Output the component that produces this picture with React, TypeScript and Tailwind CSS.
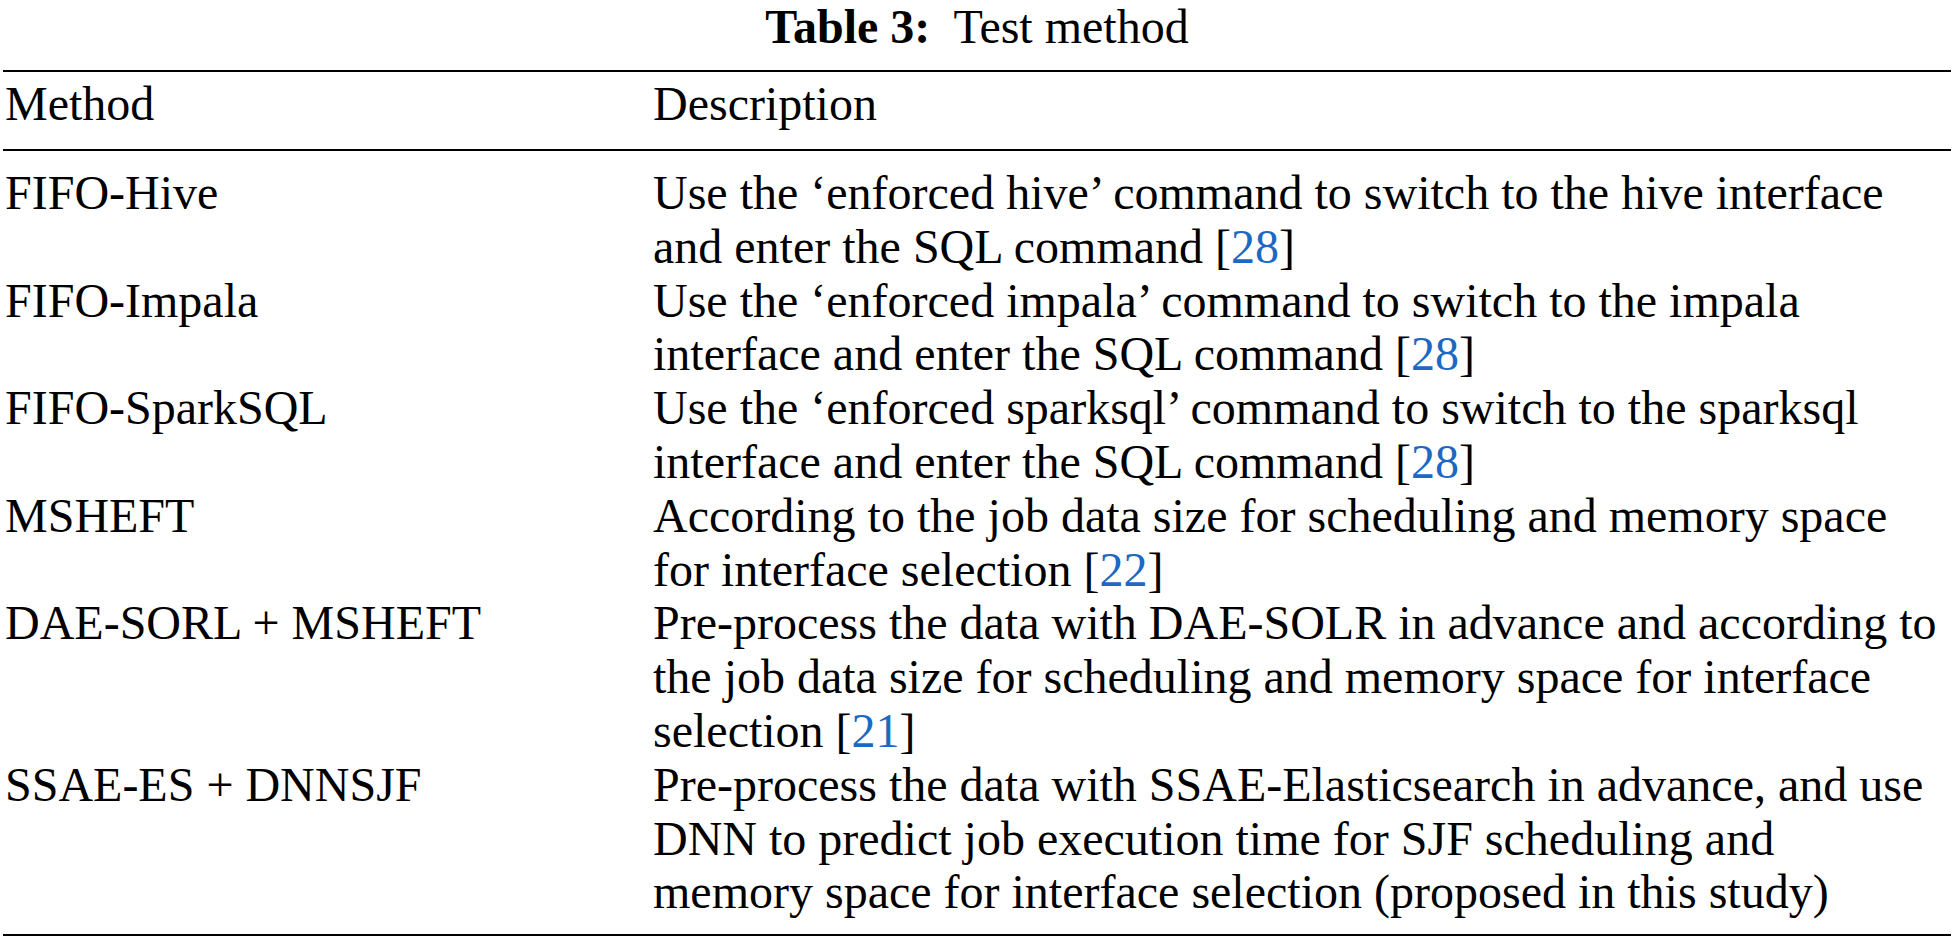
import React from 'react';

type Row = {
  method: string;
  lines: React.ReactNode[];
};

const Ref = ({ n }: { n: string }) => (
  <>
    [<span className="text-[#1d68c2]">{n}</span>]
  </>
);

const rows: Row[] = [
  {
    method: 'FIFO-Hive',
    lines: [
      'Use the ‘enforced hive’ command to switch to the hive interface',
      <>and enter the SQL command <Ref n="28" /></>,
    ],
  },
  {
    method: 'FIFO-Impala',
    lines: [
      'Use the ‘enforced impala’ command to switch to the impala',
      <>interface and enter the SQL command <Ref n="28" /></>,
    ],
  },
  {
    method: 'FIFO-SparkSQL',
    lines: [
      'Use the ‘enforced sparksql’ command to switch to the sparksql',
      <>interface and enter the SQL command <Ref n="28" /></>,
    ],
  },
  {
    method: 'MSHEFT',
    lines: [
      'According to the job data size for scheduling and memory space',
      <>for interface selection <Ref n="22" /></>,
    ],
  },
  {
    method: 'DAE-SORL + MSHEFT',
    lines: [
      'Pre-process the data with DAE-SOLR in advance and according to',
      'the job data size for scheduling and memory space for interface',
      <>selection <Ref n="21" /></>,
    ],
  },
  {
    method: 'SSAE-ES + DNNSJF',
    lines: [
      'Pre-process the data with SSAE-Elasticsearch in advance, and use',
      'DNN to predict job execution time for SJF scheduling and',
      'memory space for interface selection (proposed in this study)',
    ],
  },
];

export default function App() {
  return (
    <div className="h-[942px] w-[1954px] overflow-hidden bg-white px-[3px] font-['Liberation_Serif','Times_New_Roman',serif] text-[48px] text-black">
      <h1 className="text-center text-[48px] font-normal leading-[54px]">
        <span className="font-bold">Table 3:</span>
        {'\u00a0 '}Test method
      </h1>

      <div className="mt-[16px] border-y-2 border-black">
        <div className="grid grid-cols-[650px_1fr] border-b-2 border-black pt-[5px] pb-[18px] leading-[54px]">
          <div className="pl-[2px]">Method</div>
          <div>Description</div>
        </div>

        <div className="pt-[15px] pb-[15px] leading-[53.8px]">
          {rows.map((row) => (
            <div key={row.method} className="grid grid-cols-[650px_1fr]">
              <div className="pl-[2px] whitespace-nowrap">{row.method}</div>
              <div>
                {row.lines.map((line, i) => (
                  <div key={i} className="whitespace-nowrap">
                    {line}
                  </div>
                ))}
              </div>
            </div>
          ))}
        </div>
      </div>
    </div>
  );
}
